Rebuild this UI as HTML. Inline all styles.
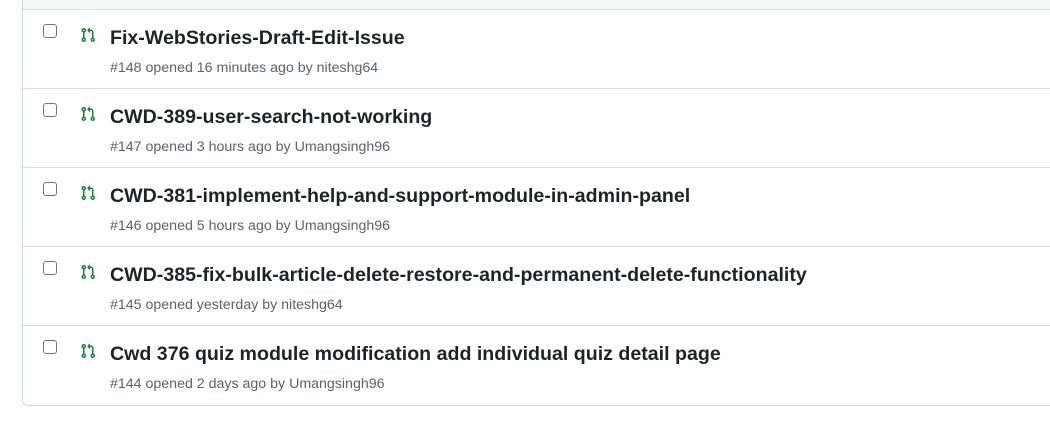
<!DOCTYPE html>
<html><head><style>
body{margin:0;background:#fff;font-family:"Liberation Sans",sans-serif;width:1050px;height:424px;overflow:hidden;position:relative}
.box{position:absolute;left:22px;top:-10px;width:1100px;height:416px;border:1px solid #d0d7de;border-radius:6px;box-sizing:border-box}
.hdr{height:18px;background:#f6f8fa;border-bottom:1px solid #d8dee4}
.row{position:relative;height:79px;border-bottom:1px solid #d8dee4;box-sizing:border-box}
.row:last-child{border-bottom:none}
.cb{position:absolute;left:20px;top:14px;width:14px;height:14px;border:1px solid #767676;border-radius:3px;box-sizing:border-box;background:#fff}
.ic{position:absolute;left:57px;top:17px}
.t{position:absolute;left:87px;top:17px;font-size:19.6px;color:#1f2328;font-weight:bold;white-space:nowrap;letter-spacing:0}
.m{position:absolute;left:87px;top:50px;font-size:14.2px;color:#59636e;white-space:nowrap}
</style></head><body>
<div class="box"><div class="hdr"></div>
<div class="row"><div class="cb"></div><svg class="ic" width="16" height="16" viewBox="0 0 16 16" fill="#1a7f37"><path d="M1.5 3.25a2.25 2.25 0 1 1 3 2.122v5.256a2.251 2.251 0 1 1-1.5 0V5.372A2.25 2.25 0 0 1 1.5 3.25Zm5.677-.177L9.573.677A.25.25 0 0 1 10 .854V2.5h1A2.5 2.5 0 0 1 13.5 5v5.628a2.251 2.251 0 1 1-1.5 0V5a1 1 0 0 0-1-1h-1v1.646a.25.25 0 0 1-.427.177L7.177 3.427a.25.25 0 0 1 0-.354ZM3.750 2.5a.75.75 0 1 0 0 1.5.75.75 0 0 0 0-1.5Zm0 9.5a.75.75 0 1 0 0 1.5.75.75 0 0 0 0-1.5Zm8.25.75a.75.75 0 1 0 1.5 0 .75.75 0 0 0-1.5 0Z"/></svg><div class="t">Fix-WebStories-Draft-Edit-Issue</div><div class="m">#148 opened 16 minutes ago by niteshg64</div></div>
<div class="row"><div class="cb"></div><svg class="ic" width="16" height="16" viewBox="0 0 16 16" fill="#1a7f37"><path d="M1.5 3.25a2.25 2.25 0 1 1 3 2.122v5.256a2.251 2.251 0 1 1-1.5 0V5.372A2.25 2.25 0 0 1 1.5 3.25Zm5.677-.177L9.573.677A.25.25 0 0 1 10 .854V2.5h1A2.5 2.5 0 0 1 13.5 5v5.628a2.251 2.251 0 1 1-1.5 0V5a1 1 0 0 0-1-1h-1v1.646a.25.25 0 0 1-.427.177L7.177 3.427a.25.25 0 0 1 0-.354ZM3.75 2.5a.75.75 0 1 0 0 1.5.75.75 0 0 0 0-1.5Zm0 9.5a.75.75 0 1 0 0 1.5.75.75 0 0 0 0-1.5Zm8.25.75a.75.75 0 1 0 1.5 0 .75.75 0 0 0-1.5 0Z"/></svg><div class="t">CWD-389-user-search-not-working</div><div class="m">#147 opened 3 hours ago by Umangsingh96</div></div>
<div class="row"><div class="cb"></div><svg class="ic" width="16" height="16" viewBox="0 0 16 16" fill="#1a7f37"><path d="M1.5 3.25a2.25 2.25 0 1 1 3 2.122v5.256a2.251 2.251 0 1 1-1.5 0V5.372A2.25 2.25 0 0 1 1.5 3.25Zm5.677-.177L9.573.677A.25.25 0 0 1 10 .854V2.5h1A2.5 2.5 0 0 1 13.5 5v5.628a2.251 2.251 0 1 1-1.5 0V5a1 1 0 0 0-1-1h-1v1.646a.25.25 0 0 1-.427.177L7.177 3.427a.25.25 0 0 1 0-.354ZM3.75 2.5a.75.75 0 1 0 0 1.5.75.75 0 0 0 0-1.5Zm0 9.5a.75.75 0 1 0 0 1.5.75.75 0 0 0 0-1.5Zm8.25.75a.75.75 0 1 0 1.5 0 .75.75 0 0 0-1.5 0Z"/></svg><div class="t">CWD-381-implement-help-and-support-module-in-admin-panel</div><div class="m">#146 opened 5 hours ago by Umangsingh96</div></div>
<div class="row"><div class="cb"></div><svg class="ic" width="16" height="16" viewBox="0 0 16 16" fill="#1a7f37"><path d="M1.5 3.25a2.25 2.25 0 1 1 3 2.122v5.256a2.251 2.251 0 1 1-1.5 0V5.372A2.25 2.25 0 0 1 1.5 3.25Zm5.677-.177L9.573.677A.25.25 0 0 1 10 .854V2.5h1A2.5 2.5 0 0 1 13.5 5v5.628a2.251 2.251 0 1 1-1.5 0V5a1 1 0 0 0-1-1h-1v1.646a.25.25 0 0 1-.427.177L7.177 3.427a.25.25 0 0 1 0-.354ZM3.75 2.5a.75.75 0 1 0 0 1.5.75.75 0 0 0 0-1.5Zm0 9.5a.75.75 0 1 0 0 1.5.75.75 0 0 0 0-1.5Zm8.25.75a.75.75 0 1 0 1.5 0 .75.75 0 0 0-1.5 0Z"/></svg><div class="t">CWD-385-fix-bulk-article-delete-restore-and-permanent-delete-functionality</div><div class="m">#145 opened yesterday by niteshg64</div></div>
<div class="row"><div class="cb"></div><svg class="ic" width="16" height="16" viewBox="0 0 16 16" fill="#1a7f37"><path d="M1.5 3.25a2.25 2.25 0 1 1 3 2.122v5.256a2.251 2.251 0 1 1-1.5 0V5.372A2.25 2.25 0 0 1 1.5 3.25Zm5.677-.177L9.573.677A.25.25 0 0 1 10 .854V2.5h1A2.5 2.5 0 0 1 13.5 5v5.628a2.251 2.251 0 1 1-1.5 0V5a1 1 0 0 0-1-1h-1v1.646a.25.25 0 0 1-.427.177L7.177 3.427a.25.25 0 0 1 0-.354ZM3.75 2.5a.75.75 0 1 0 0 1.5.75.75 0 0 0 0-1.5Zm0 9.5a.75.75 0 1 0 0 1.5.75.75 0 0 0 0-1.5Zm8.25.75a.75.75 0 1 0 1.5 0 .75.75 0 0 0-1.5 0Z"/></svg><div class="t">Cwd 376 quiz module modification add individual quiz detail page</div><div class="m">#144 opened 2 days ago by Umangsingh96</div></div>
</div>
</body></html>
